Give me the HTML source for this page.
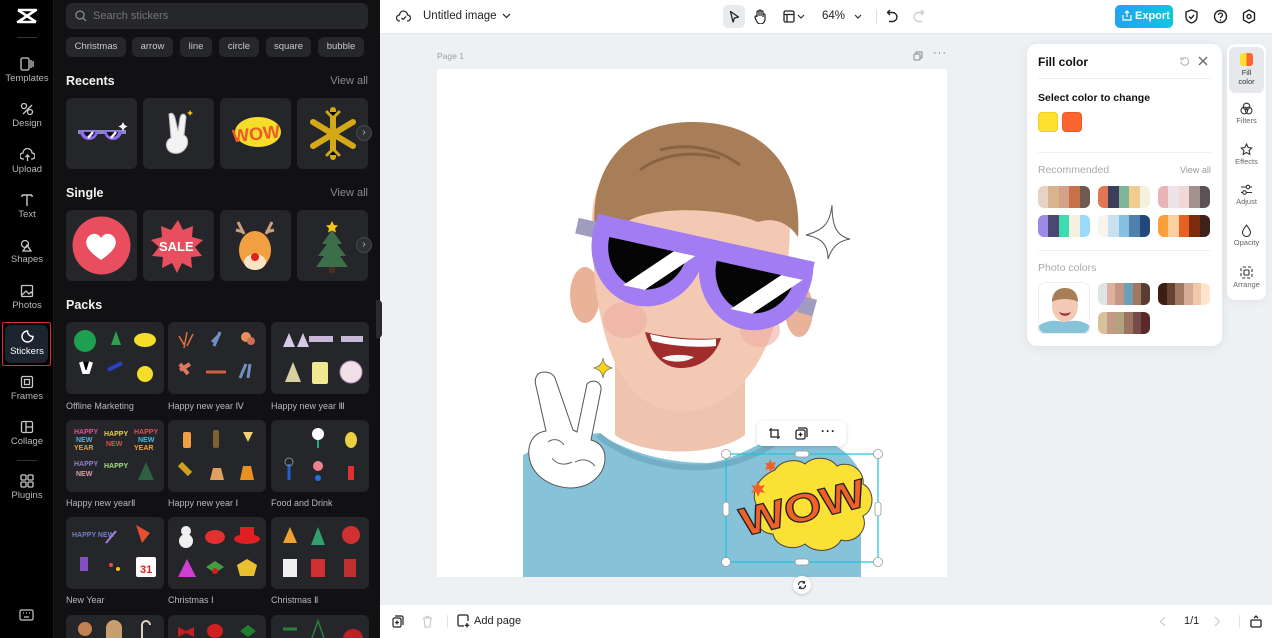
<!DOCTYPE html>
<html><head><meta charset="utf-8">
<style>
*{box-sizing:border-box;margin:0;padding:0}
html{width:1272px;height:638px;overflow:hidden}
body{width:1272px;height:638px;overflow:hidden;font-family:"Liberation Sans",sans-serif;background:#eef1f4;position:relative}
.abs{position:absolute}
#side{left:0;top:0;width:54px;height:638px;background:#000;border-right:1px solid #1c1c1e}
.si{position:absolute;left:0;width:54px;text-align:center;color:#b8b8bc;font-size:9.5px}
.si svg{display:block;margin:0 auto 2px}
#panel{left:54px;top:0;width:326px;height:638px;background:#111113;overflow:hidden}
.chip{position:absolute;top:37px;height:20px;background:#26272b;border-radius:6px;color:#c8c8cc;font-size:9.5px;line-height:20px;text-align:center}
.h{position:absolute;color:#f2f2f2;font-weight:bold;font-size:12.5px}
.va{position:absolute;right:12px;color:#8a8a90;font-size:11px}
.card{position:absolute;width:71px;height:71px;background:#25262a;border-radius:6px;overflow:hidden}
.pk{position:absolute;width:98px;height:72px;background:#25262a;border-radius:6px;overflow:hidden}
.pl{position:absolute;color:#b8b8bc;font-size:9px}
.arr{position:absolute;width:16px;height:16px;border-radius:50%;background:#2f3035;border:1px solid #48494e;color:#bbb;font-size:10px;line-height:14px;text-align:center}
#top{left:380px;top:0;width:892px;height:34px;background:#fff;border-bottom:1px solid #e6e8eb}
#bot{left:380px;top:605px;width:892px;height:33px;background:#fff}
.pal{position:absolute;width:52px;height:22px;border-radius:6px;overflow:hidden;display:flex}
.pal i{flex:1}
.ri{position:absolute;left:1227px;width:39px;text-align:center;font-size:7.5px;color:#666}
.ri svg{display:block;margin:0 auto 1px}
</style></head><body>

<div id="side" class="abs">
  <svg class="abs" style="left:16px;top:8px" width="22" height="16" viewBox="0 0 22 16"><path d="M2 2h18L2 14h18" fill="none" stroke="#fff" stroke-width="2.6" stroke-linejoin="round"/><path d="M2 2L20 14" stroke="#fff" stroke-width="2.6"/></svg>
  <div class="abs" style="left:17px;top:37px;width:20px;height:1px;background:#333"></div>
  <div class="si" style="top:57px"><svg width="14" height="14" viewBox="0 0 14 14" fill="none" stroke="#c8c8cc" stroke-width="1.3"><rect x="1" y="1" width="8" height="12" rx="1.5"/><path d="M11 3v8M13 4v6"/></svg>Templates</div>
  <div class="si" style="top:102px"><svg width="14" height="14" viewBox="0 0 14 14" fill="none" stroke="#c8c8cc" stroke-width="1.3"><circle cx="4" cy="4" r="2.5"/><circle cx="10" cy="10" r="2.5"/><path d="M3 12L12 3"/></svg>Design</div>
  <div class="si" style="top:148px"><svg width="15" height="14" viewBox="0 0 15 14" fill="none" stroke="#c8c8cc" stroke-width="1.3"><path d="M4 11H3a3 3 0 010-6 4.5 4.5 0 019 0 3 3 0 010 6h-1M7.5 13V7M5.5 9l2-2 2 2"/></svg>Upload</div>
  <div class="si" style="top:193px"><svg width="14" height="14" viewBox="0 0 14 14" fill="none" stroke="#c8c8cc" stroke-width="1.4"><path d="M2 2h10M7 2v11M2 2v2M12 2v2"/></svg>Text</div>
  <div class="si" style="top:238px"><svg width="14" height="14" viewBox="0 0 14 14" fill="none" stroke="#c8c8cc" stroke-width="1.3"><circle cx="5" cy="6" r="3.5"/><path d="M7 7l4 6H3z"/></svg>Shapes</div>
  <div class="si" style="top:284px"><svg width="14" height="14" viewBox="0 0 14 14" fill="none" stroke="#c8c8cc" stroke-width="1.3"><rect x="1.5" y="1.5" width="11" height="11" rx="1"/><path d="M2 11l4-4 3 3 2-2 2 2"/></svg>Photos</div>
  <div class="abs" style="left:2px;top:322px;width:49px;height:44px;border:1.5px solid #e0282e;border-radius:2px;padding:2px"><div style="width:100%;height:100%;background:#1c2430;border-radius:6px"></div></div>
  <div class="si" style="top:329px;color:#fff"><svg width="15" height="15" viewBox="0 0 15 15" fill="none" stroke="#fff" stroke-width="1.4"><path d="M13 7.5A5.5 5.5 0 117.5 2c0 3 2 5.5 5.5 5.5z"/></svg>Stickers</div>
  <div class="si" style="top:375px"><svg width="14" height="14" viewBox="0 0 14 14" fill="none" stroke="#c8c8cc" stroke-width="1.3"><rect x="1.5" y="1.5" width="11" height="11" rx="1.5"/><rect x="4.5" y="4.5" width="5" height="5"/></svg>Frames</div>
  <div class="si" style="top:420px"><svg width="14" height="14" viewBox="0 0 14 14" fill="none" stroke="#c8c8cc" stroke-width="1.3"><rect x="1.5" y="1.5" width="11" height="11" rx="1.5"/><path d="M6 1.5v11M6 7h6.5"/></svg>Collage</div>
  <div class="abs" style="left:17px;top:460px;width:20px;height:1px;background:#333"></div>
  <div class="si" style="top:474px"><svg width="14" height="14" viewBox="0 0 14 14" fill="none" stroke="#c8c8cc" stroke-width="1.3"><rect x="1" y="1" width="5" height="5" rx="1"/><rect x="8" y="1" width="5" height="5" rx="1"/><rect x="1" y="8" width="5" height="5" rx="1"/><rect x="8" y="8" width="5" height="5" rx="1"/></svg>Plugins</div>
  <svg class="abs" style="left:19px;top:609px" width="15" height="12" viewBox="0 0 15 12" fill="none" stroke="#c8c8cc" stroke-width="1.2"><rect x="1" y="1" width="13" height="10" rx="1.5"/><path d="M4 4h1M7 4h1M10 4h1M5 8h5"/></svg>
</div>

<div id="panel" class="abs">
  <div class="abs" style="left:12px;top:3px;width:302px;height:26px;background:#26272b;border-radius:6px"></div>
  <svg class="abs" style="left:21px;top:10px" width="12" height="12" viewBox="0 0 12 12" fill="none" stroke="#888" stroke-width="1.3"><circle cx="5" cy="5" r="4"/><path d="M8 8l3 3"/></svg>
  <div class="abs" style="left:39px;top:10px;color:#75757a;font-size:11px">Search stickers</div>
  <div class="chip" style="left:12px;width:60px">Christmas</div>
  <div class="chip" style="left:78px;width:41px">arrow</div>
  <div class="chip" style="left:126px;width:32px">line</div>
  <div class="chip" style="left:165px;width:40px">circle</div>
  <div class="chip" style="left:212px;width:45px">square</div>
  <div class="chip" style="left:264px;width:46px">bubble</div>
  <div class="h" style="left:12px;top:74px">Recents</div><div class="va" style="top:75px">View all</div>
  <div class="card" style="left:12px;top:98px"><svg width="71" height="71"><path d="M12 34h48" stroke="#8b86c8" stroke-width="4"/><path d="M14 33h18a9 9 0 01-18 0zM38 33h18a9 9 0 01-18 0z" fill="#8e6cf0"/><path d="M18 34h11a5.5 5 0 01-11 0zM41 34h11a5.5 5 0 01-11 0z" fill="#111"/><path d="M22 40l5-6M45 40l5-6" stroke="#fff" stroke-width="2.5"/><path d="M57 24l1.5 3 3 1.5-3 1.5-1.5 3-1.5-3-3-1.5 3-1.5z" fill="#fff"/></svg></div>
  <div class="card" style="left:89px;top:98px"><svg width="71" height="71"><path d="M26 16c3-2 5 0 6 4l3 13 2-13c1-5 5-5 6-1l-2 18c5 3 5 11-1 16-5 4-14 3-16-3-2-5 1-9 4-10z" fill="#f3f3f3" stroke="#bbb"/><path d="M47 12l1 2 2 1-2 1-1 2-1-2-2-1 2-1z" fill="#f5c518"/></svg></div>
  <div class="card" style="left:166px;top:98px"><svg width="71" height="71"><ellipse cx="38" cy="34" rx="23" ry="15" fill="#f5dd2a"/><text x="12" y="42" font-family="Liberation Sans" font-weight="bold" font-size="18" fill="#f05a28" transform="rotate(-6 35 35)">WOW</text></svg></div>
  <div class="card" style="left:243px;top:98px"><svg width="71" height="71" stroke="#d4a918" stroke-width="6" stroke-linecap="round"><path d="M36 12v47M16 24l40 24M16 48l40-24"/><path d="M30 14l6 6 6-6M30 57l6-6 6 6" stroke-width="3"/></svg></div>
  <div class="arr" style="left:302px;top:125px">›</div>
  <div class="h" style="left:12px;top:186px">Single</div><div class="va" style="top:187px">View all</div>
  <div class="card" style="left:12px;top:210px"><svg width="71" height="71"><circle cx="35.5" cy="35.5" r="29" fill="#e94e5f"/><path d="M35 50C20 40 18 33 22 27c4-5 10-4 13 1 3-5 9-6 13-1 4 6 2 13-13 23z" fill="#fff"/></svg></div>
  <div class="card" style="left:89px;top:210px"><svg width="71" height="71"><path d="M35 10l5 10 10-4-1 11 11 3-8 7 7 9-11 1 1 11-10-5-5 10-5-10-10 5 1-11-11-1 7-9-8-7 11-3-1-11 10 4z" fill="#e94e5f"/><text x="16" y="41" font-family="Liberation Sans" font-weight="bold" font-size="13" fill="#fff">SALE</text></svg></div>
  <div class="card" style="left:166px;top:210px"><svg width="71" height="71"><path d="M24 24l-6-12M24 22l-8-2M46 24l6-12M46 22l8-2" stroke="#c9a080" stroke-width="3"/><ellipse cx="35" cy="40" rx="16" ry="19" fill="#f0a040"/><ellipse cx="35" cy="52" rx="11" ry="8" fill="#f8e4c0"/><circle cx="35" cy="47" r="4" fill="#e02020"/></svg></div>
  <div class="card" style="left:243px;top:210px"><svg width="71" height="71"><path d="M35 20l-10 14h5l-9 12h6l-8 11h32l-8-11h6l-9-12h5z" fill="#3d6e4a"/><path d="M35 11l2 4 4 .5-3 3 1 4-4-2-4 2 1-4-3-3 4-.5z" fill="#f5c518"/><rect x="32" y="57" width="6" height="6" fill="#4a2e20"/></svg></div>
  <div class="arr" style="left:302px;top:237px">›</div>
  <div class="h" style="left:12px;top:298px">Packs</div>

  <div class="pk" style="left:12px;top:322px"><svg width="98" height="72"><circle cx="19" cy="19" r="11" fill="#1fa050"/><path d="M50 9l-5 14h10z" fill="#2ea050"/><ellipse cx="79" cy="18" rx="11" ry="7" fill="#f5dd2a"/><path d="M15 40l3 10h4l3-10" stroke="#fff" stroke-width="4"/><path d="M42 48l14-7" stroke="#3040c0" stroke-width="4"/><circle cx="79" cy="52" r="8" fill="#f5dd2a"/></svg></div>
  <div class="pl" style="left:12px;top:401px">Offline Marketing</div>
  <div class="pk" style="left:114px;top:322px"><svg width="98" height="72" stroke-width="1.5"><path d="M19 10l-3 16M11 14l6 10M25 12l-6 12" stroke="#e07040"/><path d="M44 20l8-8M46 24l6-14" stroke="#7090c0" stroke-width="3"/><circle cx="78" cy="15" r="5" fill="#e89060"/><circle cx="83" cy="19" r="4" fill="#d07050"/><path d="M12 48l10-6M12 42l8 10" stroke="#e07860" stroke-width="4"/><path d="M38 50h20" stroke="#d06040" stroke-width="3"/><path d="M72 56l6-14M80 56l2-14" stroke="#7090c0" stroke-width="3"/></svg></div>
  <div class="pl" style="left:114px;top:401px">Happy new year Ⅳ</div>
  <div class="pk" style="left:217px;top:322px"><svg width="98" height="72"><path d="M12 25l6-14 6 14zM26 25l6-14 6 14z" fill="#d8c8e8"/><rect x="38" y="14" width="24" height="6" fill="#c8b8d8"/><rect x="70" y="14" width="22" height="6" fill="#c8b8d8"/><path d="M14 60l8-20 8 20z" fill="#d8cfa0"/><rect x="41" y="40" width="16" height="22" rx="2" fill="#f0e890"/><circle cx="80" cy="50" r="11" fill="#f0e0e8" stroke="#b090c0"/></svg></div>
  <div class="pl" style="left:217px;top:401px">Happy new year Ⅲ</div>

  <div class="pk" style="left:12px;top:420px"><svg width="98" height="72" font-family="Liberation Sans" font-weight="bold" font-size="7"><text x="8" y="14" fill="#e05090">HAPPY</text><text x="10" y="22" fill="#50b0e0">NEW</text><text x="8" y="30" fill="#e0a040">YEAR</text><text x="38" y="16" fill="#f0d040">HAPPY</text><text x="40" y="26" fill="#e05050">NEW</text><text x="68" y="14" fill="#e05050">HAPPY</text><text x="72" y="22" fill="#40c0e0">NEW</text><text x="68" y="30" fill="#f0a040">YEAR</text><text x="8" y="46" fill="#9080d0">HAPPY</text><text x="10" y="56" fill="#e0a0a0">NEW</text><text x="38" y="48" fill="#a0e080">HAPPY</text><path d="M80 42l-8 18h16z" fill="#2d6040"/></svg></div>
  <div class="pl" style="left:12px;top:498px">Happy new yearⅡ</div>
  <div class="pk" style="left:114px;top:420px"><svg width="98" height="72"><rect x="15" y="12" width="8" height="16" rx="2" fill="#f0a040"/><rect x="45" y="10" width="6" height="18" rx="2" fill="#806030"/><path d="M75 12h10l-5 10z" fill="#f0d070"/><path d="M12 44l10 10" stroke="#d0a020" stroke-width="6"/><path d="M42 60h14l-3-12h-8z" fill="#e0a060"/><path d="M72 60h14l-3-14h-8z" fill="#e89020"/></svg></div>
  <div class="pl" style="left:114px;top:498px">Happy new year Ⅰ</div>
  <div class="pk" style="left:217px;top:420px"><svg width="98" height="72"><circle cx="47" cy="14" r="6" fill="#fff"/><path d="M47 20v8" stroke="#2a8" stroke-width="2"/><ellipse cx="80" cy="20" rx="6" ry="8" fill="#e8d040"/><path d="M18 44v16" stroke="#2060d0" stroke-width="3"/><circle cx="18" cy="42" r="4" fill="none" stroke="#888"/><circle cx="47" cy="46" r="5" fill="#f08090"/><circle cx="47" cy="58" r="3" fill="#2070e0"/><rect x="77" y="46" width="6" height="14" fill="#e03030"/></svg></div>
  <div class="pl" style="left:217px;top:498px">Food and Drink</div>

  <div class="pk" style="left:12px;top:517px"><svg width="98" height="72"><text x="6" y="20" font-family="Liberation Sans" font-size="7" font-weight="bold" fill="#7080c0">HAPPY NEW</text><path d="M40 26l10-12" stroke="#a080e0" stroke-width="2"/><path d="M70 8l14 8-8 10z" fill="#e85030"/><rect x="14" y="40" width="8" height="14" fill="#8050c0"/><circle cx="45" cy="48" r="2" fill="#e05050"/><circle cx="52" cy="52" r="2" fill="#f0c020"/><rect x="70" y="40" width="20" height="20" rx="2" fill="#fff"/><text x="74" y="56" font-family="Liberation Sans" font-weight="bold" font-size="11" fill="#e02020">31</text></svg></div>
  <div class="pl" style="left:12px;top:595px">New Year</div>
  <div class="pk" style="left:114px;top:517px"><svg width="98" height="72"><circle cx="18" cy="14" r="5" fill="#f0f0f0"/><circle cx="18" cy="24" r="7" fill="#f0f0f0"/><ellipse cx="47" cy="20" rx="10" ry="7" fill="#e03030"/><ellipse cx="79" cy="22" rx="13" ry="5" fill="#e02020"/><rect x="72" y="10" width="14" height="12" fill="#e02020"/><path d="M10 60l9-18 9 18z" fill="#d040d0"/><path d="M38 50l9-6 9 6-9 6z" fill="#40a040"/><circle cx="47" cy="54" r="3" fill="#d02020"/><path d="M79 42l10 6-3 11H72l-3-11z" fill="#e8c030"/></svg></div>
  <div class="pl" style="left:114px;top:595px">Christmas Ⅰ</div>
  <div class="pk" style="left:217px;top:517px"><svg width="98" height="72"><path d="M12 26l7-16 7 16z" fill="#f0a030"/><path d="M40 28l7-18 7 18z" fill="#30a070"/><ellipse cx="80" cy="18" rx="9" ry="9" fill="#d03030"/><rect x="12" y="42" width="14" height="18" fill="#f0f0f0"/><rect x="40" y="42" width="14" height="18" fill="#d03030"/><rect x="73" y="42" width="12" height="18" fill="#c03030"/></svg></div>
  <div class="pl" style="left:217px;top:595px">Christmas Ⅱ</div>

  <div class="pk" style="left:12px;top:615px;height:23px;border-radius:6px 6px 0 0"><svg width="98" height="23"><circle cx="19" cy="14" r="7" fill="#c08050"/><rect x="40" y="5" width="16" height="30" rx="8" fill="#c8a070"/><path d="M76 25V10a4 4 0 018 0" stroke="#e0d0c0" stroke-width="2" fill="none"/></svg></div>
  <div class="pk" style="left:114px;top:615px;height:23px;border-radius:6px 6px 0 0"><svg width="98" height="23"><path d="M10 12l8 4 8-4v10l-8-4-8 4z" fill="#c02020"/><ellipse cx="47" cy="16" rx="8" ry="7" fill="#d02020"/><path d="M72 16l8-6 8 6-8 6z" fill="#208030"/></svg></div>
  <div class="pk" style="left:217px;top:615px;height:23px;border-radius:6px 6px 0 0"><svg width="98" height="23"><path d="M12 14h14" stroke="#2a8040" stroke-width="3"/><path d="M47 6l-7 20h14z" fill="none" stroke="#2a8040" stroke-width="1.5"/><path d="M72 24a10 10 0 0120 0z" fill="#c02020"/></svg></div>
</div>
<div class="abs" style="left:376px;top:300px;width:6px;height:38px;background:#2a2b30;border-radius:0 4px 4px 0"></div>

<div id="top" class="abs">
  <svg class="abs" style="left:16px;top:10px" width="15" height="13" viewBox="0 0 15 13" fill="none" stroke="#333" stroke-width="1.3"><path d="M4 11H3.5a3 3 0 010-6 4 4 0 018 0 3 3 0 010 6H11"/><path d="M5.5 8l1.5 1.5 3-3"/></svg>
  <div class="abs" style="left:43px;top:10px;font-size:11.5px;color:#222">Untitled image</div>
  <svg class="abs" style="left:122px;top:13px" width="9" height="6"><path d="M1 1l3.5 3.5L8 1" stroke="#333" stroke-width="1.3" fill="none"/></svg>
  <div class="abs" style="left:343px;top:5px;width:22px;height:23px;background:#e8ebee;border-radius:5px"></div>
  <svg class="abs" style="left:349px;top:10px" width="11" height="13"><path d="M1.5 1.5l8 5.5-4 1-1.5 4z" fill="none" stroke="#222" stroke-width="1.3" stroke-linejoin="round"/></svg>
  <svg class="abs" style="left:374px;top:9px" width="12" height="15" viewBox="0 0 12 15" fill="none" stroke="#222" stroke-width="1.2"><path d="M3 8V3a1 1 0 012 0v4V2a1 1 0 012 0v5V3a1 1 0 012 0v5-2a1 1 0 012 0v4c0 3-2 5-4.5 5S3 13 2 11L1 8a1 1 0 012 0"/></svg>
  <svg class="abs" style="left:403px;top:10px" width="12" height="13" fill="none" stroke="#222" stroke-width="1.3"><rect x="1" y="1" width="10" height="11" rx="1.5"/><path d="M1 4.5h10M4 4.5v7.5"/></svg>
  <svg class="abs" style="left:417px;top:14px" width="8" height="5"><path d="M1 1l3 3 3-3" stroke="#333" stroke-width="1.2" fill="none"/></svg>
  <div class="abs" style="left:442px;top:10px;font-size:11.5px;color:#222">64%</div>
  <svg class="abs" style="left:474px;top:14px" width="8" height="5"><path d="M1 1l3 3 3-3" stroke="#333" stroke-width="1.2" fill="none"/></svg>
  <div class="abs" style="left:496px;top:10px;width:1px;height:14px;background:#ddd"></div>
  <svg class="abs" style="left:506px;top:9px" width="12" height="14"><path d="M4 1L1.5 3.5 4 6M2 3.5h4.5a4.5 4.5 0 010 9H3" stroke="#222" stroke-width="1.4" fill="none"/></svg>
  <svg class="abs" style="left:533px;top:9px" width="12" height="14"><path d="M8 1l2.5 2.5L8 6M10 3.5H5.5a4.5 4.5 0 000 9H9" stroke="#ccc" stroke-width="1.4" fill="none"/></svg>
  <div class="abs" style="left:735px;top:5px;width:58px;height:23px;border-radius:5px;background:linear-gradient(90deg,#22a2f2,#0cc8dc);color:#fff;font-size:11px;font-weight:bold;line-height:23px;padding-left:20px">Export</div>
  <svg class="abs" style="left:742px;top:10px" width="10" height="11"><path d="M5 7V1M3 3l2-2 2 2M1 5v5h8V5" stroke="#fff" stroke-width="1.2" fill="none"/></svg>
  <svg class="abs" style="left:805px;top:9px" width="13" height="15"><path d="M6.5 1L12 3v5c0 3-2.5 5-5.5 6C3.5 13 1 11 1 8V3z M4 7.5l2 2 3-3.5" stroke="#222" stroke-width="1.4" fill="none"/></svg>
  <svg class="abs" style="left:833px;top:9px" width="15" height="15"><circle cx="7.5" cy="7.5" r="6" stroke="#222" stroke-width="1.4" fill="none"/><path d="M5.5 6a2 2 0 114 0c0 1.3-2 1.5-2 3" stroke="#222" stroke-width="1.3" fill="none"/><circle cx="7.5" cy="11" r=".8" fill="#222"/></svg>
  <svg class="abs" style="left:862px;top:9px" width="14" height="15"><path d="M7 1l5.5 3v7L7 14 1.5 11V4z" stroke="#222" stroke-width="1.4" fill="none"/><circle cx="7" cy="7.5" r="2" stroke="#222" stroke-width="1.4" fill="none"/></svg>
</div>

<div class="abs" style="left:437px;top:51px;font-size:8.5px;color:#9aa0a6">Page 1</div>
<svg class="abs" style="left:913px;top:51px" width="10" height="10" fill="none" stroke="#888" stroke-width="1"><rect x="1" y="3" width="6" height="6" rx="1"/><path d="M3 3V1h6v6H7"/></svg>
<div class="abs" style="left:933px;top:47px;font-size:11px;color:#666;letter-spacing:1px">···</div>

<svg class="abs" style="left:437px;top:69px" width="510" height="508" viewBox="437 69 510 508">
  <defs>
    <clipPath id="below"><rect x="-50" y="0" width="400" height="200"/></clipPath>
    <clipPath id="lens"><rect x="-50" y="20" width="400" height="200"/></clipPath>
  </defs>
  <rect x="437" y="69" width="510" height="508" fill="#fff"/>
  <path d="M523 455c20-12 50-18 75-22 30 20 70 30 110 30 35-5 55-25 80-30 25 5 55 5 73 40v104H523z" fill="#86c3d9"/>
  <path d="M598 435c30 25 75 35 110 32 30-3 55-15 80-32" fill="none" stroke="#72afc6" stroke-width="6"/>
  <path d="M615 360c20 40 110 40 130 0v75c-30 22-100 22-130 0z" fill="#efc4ae"/>
  <ellipse cx="585" cy="295" rx="15" ry="28" fill="#e9b39a"/>
  <ellipse cx="799" cy="310" rx="14" ry="27" fill="#e9b39a"/>
  <path d="M592 220c0-60 50-88 100-88s98 30 98 88c0 90-30 190-110 192-70-2-88-100-88-192z" fill="#f3c9b3"/>
  <ellipse cx="625" cy="320" rx="22" ry="18" fill="#eeaea0" opacity=".6"/>
  <ellipse cx="760" cy="330" rx="20" ry="17" fill="#eeaea0" opacity=".6"/>
  <path d="M598 250c-14-60 10-125 90-128 75-2 115 45 110 115-10-15-25-20-40-15-30-12-80-15-110-8-20 4-38 16-50 36z" fill="#a87e58"/>
  <path d="M640 170c20-15 50-20 80-12M660 150c30-8 60 0 80 15" stroke="#8a6442" stroke-width="3" fill="none"/>
  <path d="M645 332c25 6 50 8 76 6-6 20-22 30-40 30s-30-14-36-36z" fill="#a02c2c"/>
  <path d="M650 334c20 5 45 7 66 5v7c-20 2-45 0-64-5z" fill="#fff"/>
  <path d="M662 358c8-4 22-4 32-1-8 6-24 6-32 1z" fill="#f5f5f5"/>
  <g transform="translate(598 214) rotate(12.5)">
    <rect x="-18" y="8" width="20" height="16" fill="#a09cc0"/>
    <rect x="216" y="36" width="16" height="17" fill="#a09cc0" transform="rotate(3 224 44)"/>
    <rect x="0" y="0" width="222" height="26" fill="#a17cf3"/>
    <ellipse cx="56" cy="18" rx="57" ry="63" fill="#a17cf3" clip-path="url(#below)"/>
    <ellipse cx="166" cy="18" rx="57" ry="63" fill="#a17cf3" clip-path="url(#below)"/>
    <g clip-path="url(#lens)">
      <ellipse cx="56" cy="20" rx="40" ry="44" fill="#050505"/>
      <ellipse cx="166" cy="20" rx="40" ry="44" fill="#050505"/>
      <path d="M40 64l44-46h22L62 64zM150 64l44-46h22l-44 46z" fill="#fff"/>
    </g>
  </g>
  <path d="M832 205c-2 18-8 25-26 30 16 3 22 10 22 24 4-12 10-18 22-20-14-3-18-14-18-34z" fill="#fff" stroke="#555" stroke-width="1"/>
  <path d="M603 358c1 6 3 8 9 10-6 2-8 4-9 10-1-6-3-8-9-10 6-2 8-4 9-10z" fill="#f5d21c" stroke="#555" stroke-width=".6"/>
  <path d="M544 372c-8 0-10 8-8 14l10 45c-14 2-20 15-16 30 4 15 20 26 40 27 22 0 35-15 35-30 0-10-6-16-14-18l10-50c1-8-8-12-14-6l-10 48-4-2-18-52c-2-4-6-6-11-6z" fill="#fff" stroke="#555" stroke-width="1"/>
  <path d="M548 442c5-4 12-3 16 3M552 458c4 6 12 8 20 4M575 462c8-4 15-2 20 4" stroke="#666" fill="none" stroke-width="1"/>
  <path d="M775 470c6-10 22-12 30-6 8-8 24-8 32 2 12-6 28 4 26 18 12 6 12 26 0 32 6 14-8 28-22 24-6 12-26 14-36 4-12 8-30 2-32-10-14 0-22-16-14-26-10-10-4-30 16-38z" fill="#fbe035" stroke="#444" stroke-width="1"/>
  <path d="M757 481l3 5 5-1-3 4 3 4-5-1-2 5-2-5-5 1 3-4-3-4 5 1zM770 459l2 4 4-1-2 4 2 3-4 0-1 4-2-4-4 1 2-4-2-3 4 0z" fill="#f2602a"/>
  <text x="738" y="522" font-family="Liberation Sans" font-weight="bold" font-size="40" fill="#f2602a" stroke="#222" stroke-width="1.2" transform="rotate(-14 800 505)" textLength="128" lengthAdjust="spacingAndGlyphs">WOW</text>
  <rect x="726" y="454" width="152" height="108" fill="none" stroke="#1ec2d8" stroke-width="1.2"/>
  <g fill="#fff" stroke="#999" stroke-width=".8">
    <circle cx="726" cy="454" r="4.5"/><circle cx="878" cy="454" r="4.5"/><circle cx="726" cy="562" r="4.5"/><circle cx="878" cy="562" r="4.5"/>
    <rect x="795" y="451" width="14" height="6" rx="3"/><rect x="795" y="559" width="14" height="6" rx="3"/>
    <rect x="723" y="502" width="6" height="14" rx="3"/><rect x="875" y="502" width="6" height="14" rx="3"/>
  </g>
</svg>
<div class="abs" style="left:757px;top:421px;width:89px;height:25px;background:#fff;border-radius:6px;box-shadow:0 1px 4px rgba(0,0,0,.15)"></div>
<svg class="abs" style="left:768px;top:427px" width="13" height="13" fill="none" stroke="#222" stroke-width="1.3"><path d="M3 1v9h9M1 3h9v9"/></svg>
<svg class="abs" style="left:795px;top:427px" width="13" height="13" fill="none" stroke="#222" stroke-width="1.3"><rect x="1" y="3" width="9" height="9" rx="1.5"/><path d="M3 1h7.5a1.5 1.5 0 011.5 1.5V10"/><path d="M5.5 5.5v4M3.5 7.5h4"/></svg>
<div class="abs" style="left:821px;top:424px;font-size:12px;color:#222;letter-spacing:1px;font-weight:bold">···</div>
<div class="abs" style="left:793px;top:576px;width:18px;height:18px;border-radius:50%;background:#fff;box-shadow:0 1px 3px rgba(0,0,0,.2)"></div>
<svg class="abs" style="left:797px;top:580px" width="10" height="10" fill="none" stroke="#333" stroke-width="1.2"><path d="M1.5 5a3.5 3.5 0 016-2.5M8.5 5a3.5 3.5 0 01-6 2.5M7.5 1v2h-2M2.5 9V7h2"/></svg>

<div class="abs" style="left:1027px;top:44px;width:195px;height:302px;background:#fff;border-radius:10px;box-shadow:0 2px 10px rgba(0,0,0,.08)"></div>
<div class="abs" style="left:1038px;top:55px;font-size:12px;font-weight:bold;color:#111">Fill color</div>
<svg class="abs" style="left:1179px;top:56px" width="11" height="11" fill="none" stroke="#bbb" stroke-width="1.2"><path d="M2 5.5a3.8 3.8 0 101.2-2.8M2 1v2.5h2.5"/></svg>
<svg class="abs" style="left:1198px;top:56px" width="10" height="10" stroke="#666" stroke-width="1.3"><path d="M1 1l8 8M9 1l-8 8"/></svg>
<div class="abs" style="left:1038px;top:78px;width:173px;height:1px;background:#f0f0f2"></div>
<div class="abs" style="left:1038px;top:92px;font-size:10.5px;font-weight:bold;color:#111">Select color to change</div>
<div class="abs" style="left:1038px;top:112px;width:20px;height:20px;border-radius:4px;background:#fde02f;border:1px solid #eed020"></div>
<div class="abs" style="left:1062px;top:112px;width:20px;height:20px;border-radius:4px;background:#fd6530;border:1px solid #e85a28"></div>
<div class="abs" style="left:1038px;top:152px;width:173px;height:1px;background:#f0f0f2"></div>
<div class="abs" style="left:1038px;top:164px;font-size:10.5px;color:#aaa">Recommended</div>
<div class="abs" style="left:1180px;top:165px;font-size:9px;color:#999">View all</div>
<div class="pal" style="left:1038px;top:186px"><i style="background:#e6d3c3"></i><i style="background:#d8b48e"></i><i style="background:#d4a088"></i><i style="background:#c87048"></i><i style="background:#6e5a50"></i></div>
<div class="pal" style="left:1098px;top:186px"><i style="background:#e07858"></i><i style="background:#3d3d5c"></i><i style="background:#7fb59a"></i><i style="background:#f2cc8f"></i><i style="background:#f4f1de"></i></div>
<div class="pal" style="left:1158px;top:186px"><i style="background:#e8b4b8"></i><i style="background:#eee3e9"></i><i style="background:#f0d8d4"></i><i style="background:#a39190"></i><i style="background:#5e5257"></i></div>
<div class="pal" style="left:1038px;top:215px"><i style="background:#9c89e8"></i><i style="background:#4a4870"></i><i style="background:#3ddbb0"></i><i style="background:#f4f1e1"></i><i style="background:#99d9f9"></i></div>
<div class="pal" style="left:1098px;top:215px"><i style="background:#f7f4ee"></i><i style="background:#c9e0ef"></i><i style="background:#88c0e2"></i><i style="background:#5080ad"></i><i style="background:#22497a"></i></div>
<div class="pal" style="left:1158px;top:215px"><i style="background:#fb9f3a"></i><i style="background:#fdd0a2"></i><i style="background:#e86024"></i><i style="background:#7f2c0c"></i><i style="background:#3f231a"></i></div>
<div class="abs" style="left:1038px;top:250px;width:173px;height:1px;background:#f0f0f2"></div>
<div class="abs" style="left:1038px;top:262px;font-size:10.5px;color:#aaa">Photo colors</div>
<svg class="abs" style="left:1038px;top:282px" width="52" height="52"><defs><clipPath id="th"><rect width="52" height="52" rx="7"/></clipPath></defs><g clip-path="url(#th)"><rect width="52" height="52" fill="#fff"/><path d="M0 44c10-6 16-6 26-4 10-2 18-2 26 4v8H0z" fill="#86c3d9"/><ellipse cx="27" cy="24" rx="13" ry="16" fill="#f3c9b3"/><path d="M14 20c0-10 6-14 13-14s13 4 13 14c-6-4-20-4-26 0z" fill="#a87e58"/><path d="M21 30c4 2 8 2 12 0-2 5-10 5-12 0z" fill="#a02c2c"/></g><rect x=".5" y=".5" width="51" height="51" rx="7" fill="none" stroke="#eee"/></svg>
<div class="pal" style="left:1098px;top:283px"><i style="background:#dfe4e7"></i><i style="background:#ddb09f"></i><i style="background:#c49484"></i><i style="background:#6c9fb5"></i><i style="background:#a47760"></i><i style="background:#5a3d30"></i></div>
<div class="pal" style="left:1158px;top:283px"><i style="background:#3d1e10"></i><i style="background:#654330"></i><i style="background:#a07864"></i><i style="background:#d4ab94"></i><i style="background:#efc9aa"></i><i style="background:#fde4cb"></i></div>
<div class="pal" style="left:1098px;top:312px"><i style="background:#d9c19c"></i><i style="background:#c59a85"></i><i style="background:#b3a27f"></i><i style="background:#9b7560"></i><i style="background:#7a4b4b"></i><i style="background:#5a2a2a"></i></div>

<div class="abs" style="left:1227px;top:44px;width:39px;height:256px;background:#fff;border-radius:8px;box-shadow:0 2px 8px rgba(0,0,0,.06)"></div>
<div class="abs" style="left:1229px;top:47px;width:35px;height:46px;background:#e6e8eb;border-radius:6px"></div>
<div class="ri" style="top:53px;color:#333"><div style="width:13px;height:13px;margin:0 auto 2px;border-radius:3px;background:linear-gradient(90deg,#fde02f 50%,#fd6530 50%)"></div>Fill<br>color</div>
<div class="ri" style="top:102px"><svg width="13" height="13" fill="none" stroke="#333" stroke-width="1.1"><circle cx="6.5" cy="4.5" r="3.3"/><circle cx="4.3" cy="8.5" r="3.3"/><circle cx="8.7" cy="8.5" r="3.3"/></svg>Filters</div>
<div class="ri" style="top:143px"><svg width="13" height="13" fill="none" stroke="#333" stroke-width="1.1"><path d="M6.5 1l1.6 3.5 3.6.5-2.6 2.5.7 3.8-3.3-1.8-3.3 1.8.7-3.8L1.3 5l3.6-.5z"/></svg>Effects</div>
<div class="ri" style="top:183px"><svg width="13" height="13" fill="none" stroke="#333" stroke-width="1.1"><path d="M1 4h11M1 9.5h11"/><circle cx="8" cy="4" r="1.8" fill="#fff"/><circle cx="4.5" cy="9.5" r="1.8" fill="#fff"/></svg>Adjust</div>
<div class="ri" style="top:224px"><svg width="13" height="13" fill="none" stroke="#333" stroke-width="1.1"><path d="M6.5 1c2 3 4 5 4 7.5a4 4 0 01-8 0c0-2.5 2-4.5 4-7.5z"/></svg>Opacity</div>
<div class="ri" style="top:266px"><svg width="13" height="13" fill="none" stroke="#333" stroke-width="1.1"><rect x="1" y="1" width="11" height="11" rx="2" stroke-dasharray="3 2"/><rect x="4" y="4" width="5" height="5" rx="1"/></svg>Arrange</div>

<div id="bot" class="abs">
  <svg class="abs" style="left:12px;top:10px" width="12" height="13" fill="none" stroke="#222" stroke-width="1.2"><rect x="1" y="3" width="8" height="9" rx="1.5"/><path d="M3 1h6.5A1.5 1.5 0 0111 2.5V10M5 5.5v4M3 7.5h4"/></svg>
  <svg class="abs" style="left:42px;top:10px" width="11" height="13" fill="none" stroke="#ccc" stroke-width="1.2"><path d="M1 3h9M4 3V1.5h3V3M2 3l1 9h5l1-9"/></svg>
  <div class="abs" style="left:67px;top:10px;width:1px;height:13px;background:#e3e3e3"></div>
  <svg class="abs" style="left:77px;top:9px" width="13" height="14" fill="none" stroke="#222" stroke-width="1.3"><path d="M7 12H2.5A1.5 1.5 0 011 10.5v-8A1.5 1.5 0 012.5 1h7A1.5 1.5 0 0111 2.5V7M10 9v4.5M7.8 11.3h4.4"/></svg>
  <div class="abs" style="left:94px;top:10px;font-size:11px;color:#222">Add page</div>
  <svg class="abs" style="left:779px;top:11px" width="7" height="11"><path d="M6 1L1.5 5.5 6 10" stroke="#ccc" stroke-width="1.2" fill="none"/></svg>
  <div class="abs" style="left:804px;top:10px;font-size:11px;color:#222">1/1</div>
  <svg class="abs" style="left:834px;top:11px" width="7" height="11"><path d="M1 1l4.5 4.5L1 10" stroke="#ccc" stroke-width="1.2" fill="none"/></svg>
  <div class="abs" style="left:859px;top:10px;width:1px;height:13px;background:#e3e3e3"></div>
  <svg class="abs" style="left:870px;top:9px" width="12" height="14" fill="none" stroke="#222" stroke-width="1.3"><rect x="1" y="6" width="10" height="7" rx="1"/><path d="M4 4l2-2 2 2"/></svg>
</div>
</body></html>
